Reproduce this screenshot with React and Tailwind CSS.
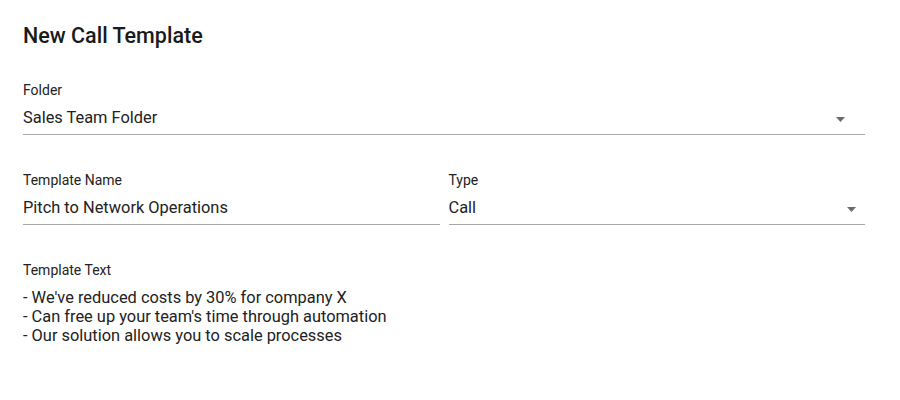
import React from "react";

function Caret() {
  return (
    <svg width="9" height="5" viewBox="0 0 9 5" className="shrink-0">
      <path d="M0 0 L9 0 L4.5 5 Z" fill="#6b6b6b" />
    </svg>
  );
}

function Field({ label, value, caretGap }) {
  return (
    <div className="flex flex-col">
      <label className="text-[14px] leading-4 text-[#222]">{label}</label>
      <div className="flex items-center justify-between border-b border-[#a8a8a8] h-[37px] pt-[5px]">
        <span className="text-[16.4px] text-[#222]">{value}</span>
        {caretGap && (
          <span className={caretGap + " mt-[1px]"}>
            <Caret />
          </span>
        )}
      </div>
    </div>
  );
}

export default function App() {
  return (
    <div className="w-[900px] h-[400px] bg-white pl-[23px] pr-[35px] pt-[24px]" style={{ fontFamily: "Roboto, sans-serif" }}>
      <h1 className="text-[21.5px] font-medium leading-6 text-[#1a1a1a]">New Call Template</h1>

      <div className="mt-[34px]">
        <Field label="Folder" value="Sales Team Folder" caretGap="mr-[20px]" />
      </div>

      <div className="mt-[37px] grid grid-cols-2 gap-[9px]">
        <Field label="Template Name" value="Pitch to Network Operations" />
        <Field label="Type" value="Call" caretGap="mr-[9px]" />
      </div>

      <div className="mt-[37px]">
        <div className="text-[14px] leading-4 text-[#222]">Template Text</div>
        <div className="mt-[10px] text-[16.4px] leading-[19px] text-[#222]">
          <div>- We've reduced costs by 30% for company X</div>
          <div>- Can free up your team's time through automation</div>
          <div>- Our solution allows you to scale processes</div>
        </div>
      </div>
    </div>
  );
}
